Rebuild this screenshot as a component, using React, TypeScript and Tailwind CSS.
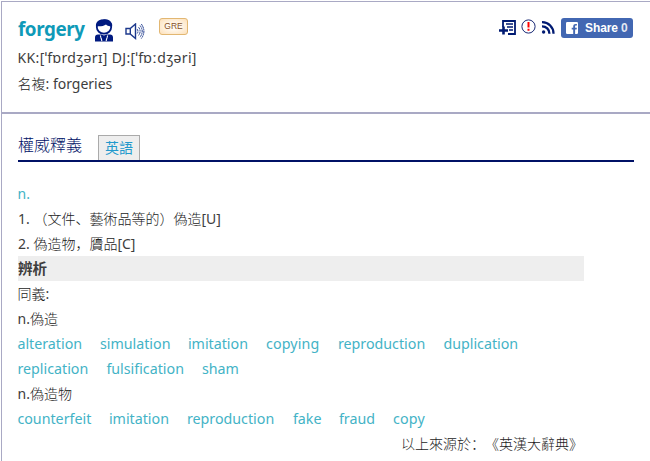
import React from 'react';

type Word = { text: string; box: string };

const forging: Word[] = [
  { text: 'alteration', box: 'w-[82.5px]' },
  { text: 'simulation', box: 'w-[88px]' },
  { text: 'imitation', box: 'w-[78px]' },
  { text: 'copying', box: 'w-[72px] tracking-[0.15px]' },
  { text: 'reproduction', box: 'w-[105.5px]' },
  { text: 'duplication', box: 'w-[80px]' },
];
const forging2: Word[] = [
  { text: 'replication', box: 'w-[89px]' },
  { text: 'fulsification', box: 'w-[95.5px]' },
  { text: 'sham', box: 'w-[50px]' },
];
const forged: Word[] = [
  { text: 'counterfeit', box: 'w-[91.5px]' },
  { text: 'imitation', box: 'w-[78px]' },
  { text: 'reproduction', box: 'w-[106px]' },
  { text: 'fake', box: 'w-[46px]' },
  { text: 'fraud', box: 'w-[54px]' },
  { text: 'copy', box: 'w-[40px] tracking-[0.2px]' },
];

function Words({ items }: { items: Word[] }) {
  return (
    <div className="-ml-[0.6px] flex h-[25px] text-[14.25px] text-[#43b3c6]">
      {items.map((w) => (
        <a key={w.text} className={`${w.box} shrink-0 whitespace-nowrap`}>{w.text}</a>
      ))}
    </div>
  );
}

function Han({ children }: { children: React.ReactNode }) {
  return <span className="font-light text-[#1c1c1c]">{children}</span>;
}

function Person() {
  return (
    <svg className="mt-[17px] h-[23px] w-5" viewBox="0 0 20 23">
      <ellipse cx="10" cy="8" rx="7.2" ry="6.7" fill="white" stroke="#001a80" strokeWidth="1.8" />
      <path d="M2 7.6C1.4 3.6 4.5 .4 9 .6c3-.9 7.3-.1 8.8 3.7.5 1.3.5 2.3.2 3.5L16 7.2c-1.6-.2-2.9-.7-4-1.8-2 1.4-5 2.1-8.2 1.9Z" fill="#001a80" />
      <path d="M1 22.5v-4c0-2 1.1-3 3-3h3l3 1 3-1h3c1.9 0 3 1 3 3v4Z" fill="#001a80" />
      <path d="m6.4 16.5 1.5 5.5m5.7-5.5L12.1 22" stroke="white" strokeWidth="1.1" />
      <path d="m7.6 16 2.4 1.2 2.4-1.2v3L10 17.8 7.6 19Z" fill="#001a80" />
    </svg>
  );
}

function Speaker() {
  return (
    <svg className="mt-[21px] h-[17px] w-5" viewBox="0 0 20 17" fill="none" stroke="#1c388c">
      <path d="M1 5.5h4.2L10.5 1v14.5L5.2 11H1ZM5.3 5.5V11" strokeWidth="1.4" />
      <path d="M12.2 6.2q1.5 2.2 0 4.3M13.6 4.2q3 4 0 8.2M15 2.5q4.4 5.7 0 11.7M16.3 1q5.2 7.2 0 14.6" strokeWidth="1" strokeDasharray="2 .5" />
    </svg>
  );
}

export default function App() {
  return (
    <div className="h-[461px] w-[650px] overflow-hidden bg-white pl-px pt-px font-['Noto_Sans','Noto_Sans_CJK_SC',sans-serif] text-[14px] leading-[25px] text-[#3d3d3d] [text-spacing-trim:space-all]">
      <div className="h-[460px] border-l border-t border-[#a9a9c4]">
        <header className="h-[112px] border-b-2 border-[#a9a9c4] pl-4">
          <div className="flex h-[43px] items-start">
            <h1 className="mt-[15px] w-[76px] text-[18.8px] font-bold leading-[25px] tracking-[-0.4px] text-[#0f9ab8]">forgery</h1>
            <Person />
            <div className="w-[11px]" />
            <Speaker />
            <span className="ml-[14px] mt-4 flex h-[17px] w-[29px] items-center justify-center rounded-[3px] border border-[#e2b772] bg-[radial-gradient(ellipse,#fffaf2_25%,#fde0b9)] font-['Liberation_Sans',sans-serif] text-[8.5px] leading-none text-[#855028]">GRE</span>
            <div className="ml-auto mr-[17px] mt-4 flex">
              <svg className="mt-px h-[17px] w-[18px]" viewBox="0 0 18 17" fill="none" stroke="#001a72" strokeWidth="2">
                <path d="M4 8V2h12v13H9" strokeWidth="1.8" />
                <path d="M0 11.5h9M4.5 7.5v8" strokeWidth="2.6" />
                <path d="M7 5h7M8 8h6M10 11h4" strokeWidth="1.5" />
              </svg>
              <svg className="ml-[4px] mt-px h-[15px] w-[15px]" viewBox="0 0 15 15">
                <circle cx="7.5" cy="7.5" r="6.6" fill="white" stroke="#1b2b76" />
                <path d="M7.5 3v5.5M7.5 9.7v2" stroke="#f00" strokeWidth="2" />
              </svg>
              <svg className="ml-[5px] mt-[3px] h-[13px] w-[14px]" viewBox="0 0 14 13" fill="none" stroke="#001a72" strokeWidth="2.3">
                <path d="M1 1.2A11.3 11.3 0 0 1 12.5 12.7M1 5.3a7.3 7.3 0 0 1 7.4 7.4" />
                <circle cx="2.6" cy="11" r="1.7" fill="#001a72" stroke="none" />
              </svg>
              <button className="ml-[6px] flex h-5 w-[72px] items-center rounded-[3px] bg-[#4267b2] pl-[5px] font-['Liberation_Sans',sans-serif] text-[12px] font-bold leading-5 tracking-[-0.1px] text-white">
                <svg className="mr-[7px] h-3 w-3 shrink-0" viewBox="0 0 12 12">
                  <rect width="12" height="12" rx="1.2" fill="white" />
                  <path d="M7.2 12V7.5H5.7V5.7h1.5V4.4c0-1.7 1-2.5 2.5-2.5h1.2v1.7H10c-.7 0-.9.3-.9.9v1.2h1.8l-.3 1.8H9.1V12Z" fill="#4267b2" />
                </svg>
                <span className="whitespace-nowrap">Share <span className="opacity-85">0</span></span>
              </button>
            </div>
          </div>
          <div className="-ml-[0.5px] h-[26px] text-[14px] tracking-[0.36px]">KK:[ˈfɒrdʒərɪ] DJ:[ˈfɒːdʒəri]</div>
          <div className="-ml-[0.5px] text-[14px]"><Han>名複</Han>: forgeries</div>
        </header>
        <main className="pl-4 pr-4">
          <div className="mt-[20px] flex h-[28px] items-end border-b-2 border-[#001166]">
            <h2 className="mb-[1px] w-20 text-[16px] font-light leading-[28px] text-[#001166]">權威釋義</h2>
            <div className="flex h-[25px] w-[42px] justify-center border border-b-0 border-[#aaa] bg-[#eee] text-[14px] leading-[23px] text-[#2299cc]">英語</div>
          </div>
          <section className="mt-[19px] w-[566px]">
            <div className="-ml-[0.5px] h-[25px] text-[#43b3c6]">n.</div>
            <div className="h-[25px]">1. <Han>（文件、藝術品等的）偽造</Han>[U]</div>
            <div className="h-[25px]">2. <Han>偽造物，贗品</Han>[C]</div>
            <h3 className="h-[25px] bg-[#eee] text-[14.5px] font-bold">辨析</h3>
            <div className="-ml-[0.5px] h-[25px]"><Han>同義</Han>:</div>
            <div className="-ml-[0.5px] h-[25px]">n.<Han>偽造</Han></div>
            <Words items={forging} />
            <Words items={forging2} />
            <div className="-ml-[0.5px] h-[25px]">n.<Han>偽造物</Han></div>
            <Words items={forged} />
            <div className="mr-px h-[25px] text-right"><Han>以上來源於：《英漢大辭典》</Han></div>
          </section>
        </main>
      </div>
    </div>
  );
}
